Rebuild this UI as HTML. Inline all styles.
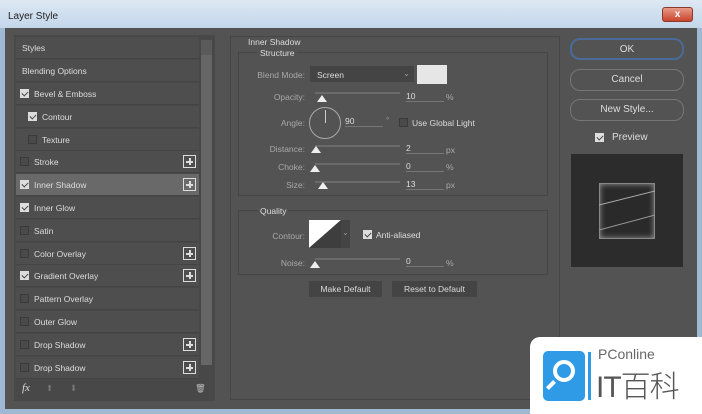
<!DOCTYPE html><html><head><style>
*{margin:0;padding:0;box-sizing:border-box}
body{width:702px;height:414px;overflow:hidden;background:#9fb9d4;font-family:"Liberation Sans",sans-serif;font-size:8.5px;color:#ddd;position:relative}
.a{position:absolute}
.t{position:absolute;white-space:nowrap}
.row{position:absolute;left:16px;width:183px;height:22px;background:#4e4e4e;border-bottom:1px solid #444}
.row span{position:absolute;top:6px}
.cb{position:absolute;top:6px;width:9px;height:9px;border:1px solid #3a3a3a;background:#4a4a4a}
.cb.on{background:#ddd;border-color:#ddd}
.cb.on:after{content:"";position:absolute;left:2px;top:0px;width:3px;height:5px;border:solid #444;border-width:0 1.5px 1.5px 0;transform:rotate(45deg)}
.plus{position:absolute;right:3px;top:4px;width:13px;height:13px;border:1px solid #ddd;}
.plus:before{content:"";position:absolute;left:2px;top:5px;width:7px;height:1.5px;background:#ddd}
.plus:after{content:"";position:absolute;left:5px;top:2px;width:1.5px;height:7px;background:#ddd}
.sl{position:absolute;height:2px;background:#6a6a6a;width:85px}
.th{position:absolute;width:0;height:0;border-left:5px solid transparent;border-right:5px solid transparent;border-bottom:7px solid #eee}
.in{position:absolute;border-bottom:1px solid #777;height:11px}
.lab{position:absolute;color:#a8a8a8;text-align:right;width:70px}
.btn{position:absolute;border:1px solid #777;border-radius:10px;text-align:center;font-size:10px;color:#ddd;height:22px;line-height:20px}
</style></head><body>
<div class="a" style="left:0;top:0;width:702px;height:28px;background:linear-gradient(#dde8f3,#c3d6ea)"></div>
<div class="t" style="left:8px;top:11px;font-size:10px;color:#222">Layer Style</div>
<div class="a" style="left:662px;top:7px;width:31px;height:15px;background:linear-gradient(#e89a8a,#c8442c);border:1px solid #8a3a2a;border-radius:3px;color:#fff;font-size:10px;text-align:center;line-height:13px;font-weight:bold">x</div>
<div class="a" style="left:5px;top:28px;width:692px;height:381px;background:#535353"></div>
<!-- left panel -->
<div class="a" style="left:14px;top:35px;width:201px;height:366px;background:#484848"></div>
<div class="a" style="left:201px;top:40px;width:11px;height:325px;background:#5a5a5a"></div>
<div class="a" style="left:201px;top:55px;width:11px;height:310px;background:#666"></div>
<div class="row" style="top:37px"><span style="left:6px">Styles</span></div>
<div class="row" style="top:60px"><span style="left:6px">Blending Options</span></div>
<div class="row" style="top:83px"><div class="cb on" style="left:4px"></div><span style="left:18px">Bevel &amp; Emboss</span></div>
<div class="row" style="top:106px"><div class="cb on" style="left:12px"></div><span style="left:26px">Contour</span></div>
<div class="row" style="top:129px"><div class="cb" style="left:12px"></div><span style="left:26px">Texture</span></div>
<div class="row" style="top:151px"><div class="cb" style="left:4px"></div><span style="left:18px">Stroke</span><div class="plus"></div></div>
<div class="row" style="top:174px;background:#696969"><div class="cb on" style="left:4px"></div><span style="left:18px">Inner Shadow</span><div class="plus"></div></div>
<div class="row" style="top:197px"><div class="cb on" style="left:4px"></div><span style="left:18px">Inner Glow</span></div>
<div class="row" style="top:220px"><div class="cb" style="left:4px"></div><span style="left:18px">Satin</span></div>
<div class="row" style="top:243px"><div class="cb" style="left:4px"></div><span style="left:18px">Color Overlay</span><div class="plus"></div></div>
<div class="row" style="top:265px"><div class="cb on" style="left:4px"></div><span style="left:18px">Gradient Overlay</span><div class="plus"></div></div>
<div class="row" style="top:288px"><div class="cb" style="left:4px"></div><span style="left:18px">Pattern Overlay</span></div>
<div class="row" style="top:311px"><div class="cb" style="left:4px"></div><span style="left:18px">Outer Glow</span></div>
<div class="row" style="top:334px"><div class="cb" style="left:4px"></div><span style="left:18px">Drop Shadow</span><div class="plus"></div></div>
<div class="row" style="top:357px"><div class="cb" style="left:4px"></div><span style="left:18px">Drop Shadow</span><div class="plus"></div></div>
<div class="t" style="left:22px;top:382px;font-size:11px;font-style:italic;font-family:'Liberation Serif',serif">fx</div>
<div class="t" style="left:46px;top:383px;color:#777">⬆</div><div class="t" style="left:70px;top:383px;color:#777">⬇</div>
<div class="t" style="left:195px;top:383px;color:#bbb">🗑</div>
<!-- middle -->
<div class="a" style="left:230px;top:36px;width:330px;height:364px;border:1px solid #464646"></div>
<div class="t" style="left:248px;top:37px">Inner Shadow</div>
<div class="a" style="left:238px;top:52px;width:310px;height:144px;border:1px solid #464646"></div>
<div class="t" style="left:258px;top:48px;background:#535353;padding:0 2px">Structure</div>
<div class="lab" style="left:235px;top:70px">Blend Mode:</div>
<div class="a" style="left:310px;top:66px;width:104px;height:16px;background:#444"></div>
<div class="t" style="left:317px;top:70px">Screen</div><div class="t" style="left:403px;top:68px;color:#999">⌄</div>
<div class="a" style="left:417px;top:65px;width:30px;height:19px;background:#e6e6e6"></div>
<div class="lab" style="left:235px;top:92px">Opacity:</div>
<div class="sl" style="left:315px;top:92px"></div><div class="th" style="left:317px;top:95px"></div>
<div class="in" style="left:406px;top:91px;width:38px">10</div><div class="t" style="left:446px;top:92px;color:#aaa">%</div>
<div class="lab" style="left:235px;top:118px">Angle:</div>
<div class="a" style="left:309px;top:107px;width:32px;height:32px;border:1px solid #aaa;border-radius:50%"></div>
<div class="a" style="left:325px;top:110px;width:1px;height:13px;background:#ccc"></div>
<div class="in" style="left:345px;top:116px;width:38px">90</div><div class="t" style="left:386px;top:115px;color:#999">°</div>
<div class="cb" style="left:399px;top:118px"></div><div class="t" style="left:412px;top:118px">Use Global Light</div>
<div class="lab" style="left:235px;top:144px">Distance:</div>
<div class="sl" style="left:315px;top:145px"></div><div class="th" style="left:311px;top:146px"></div>
<div class="in" style="left:406px;top:143px;width:38px">2</div><div class="t" style="left:446px;top:145px;color:#aaa">px</div>
<div class="lab" style="left:235px;top:162px">Choke:</div>
<div class="sl" style="left:315px;top:163px"></div><div class="th" style="left:310px;top:165px"></div>
<div class="in" style="left:406px;top:161px;width:38px">0</div><div class="t" style="left:446px;top:162px;color:#aaa">%</div>
<div class="lab" style="left:235px;top:180px">Size:</div>
<div class="sl" style="left:315px;top:181px"></div><div class="th" style="left:318px;top:182px"></div>
<div class="in" style="left:406px;top:179px;width:38px">13</div><div class="t" style="left:446px;top:180px;color:#aaa">px</div>
<div class="a" style="left:238px;top:210px;width:310px;height:65px;border:1px solid #464646"></div>
<div class="t" style="left:258px;top:206px;background:#535353;padding:0 2px">Quality</div>
<div class="lab" style="left:235px;top:231px">Contour:</div>
<svg class="a" style="left:309px;top:220px" width="34" height="28"><polygon points="0,0 32,0 0,28" fill="#fff"/><polygon points="32,0 32,28 0,28" fill="#3e3e3e"/></svg>
<div class="a" style="left:341px;top:220px;width:9px;height:28px;background:#444;color:#999;font-size:8px;text-align:center;line-height:26px">⌄</div>
<div class="cb on" style="left:363px;top:230px"></div><div class="t" style="left:376px;top:230px">Anti-aliased</div>
<div class="lab" style="left:235px;top:258px">Noise:</div>
<div class="sl" style="left:315px;top:258px"></div><div class="th" style="left:310px;top:261px"></div>
<div class="in" style="left:406px;top:256px;width:38px">0</div><div class="t" style="left:446px;top:258px;color:#aaa">%</div>
<div class="a" style="left:309px;top:281px;width:73px;height:16px;background:#444;text-align:center;line-height:16px">Make Default</div>
<div class="a" style="left:392px;top:281px;width:85px;height:16px;background:#444;text-align:center;line-height:16px">Reset to Default</div>
<!-- right -->
<div class="btn" style="left:570px;top:38px;width:114px;border:2px solid #4a6a9a">OK</div>
<div class="btn" style="left:570px;top:69px;width:114px">Cancel</div>
<div class="btn" style="left:570px;top:99px;width:114px">New Style...</div>
<div class="cb on" style="left:595px;top:133px"></div><div class="t" style="left:612px;top:132px;font-size:10px">Preview</div>
<div class="a" style="left:571px;top:154px;width:112px;height:113px;background:#2c2c2c"></div>
<div class="a" style="left:599px;top:183px;width:56px;height:56px;background:#2a2a2a;border:1px solid #888;box-shadow:inset 0 0 6px #999"></div>
<svg class="a" style="left:599px;top:183px" width="56" height="56"><line x1="0" y1="22" x2="56" y2="8" stroke="#aaa"/><line x1="0" y1="47" x2="56" y2="32" stroke="#999"/></svg>
<!-- logo -->
<div class="a" style="left:530px;top:337px;width:172px;height:77px;background:#fff;border-radius:10px 0 0 0"></div>
<div class="a" style="left:543px;top:351px;width:42px;height:50px;background:#2f9be6;border-radius:5px"></div>
<div class="a" style="left:553px;top:360px;width:22px;height:22px;border:4px solid #fff;border-radius:50%"></div>
<div class="a" style="left:546px;top:383px;width:10px;height:4px;background:#fff;transform:rotate(-45deg)"></div>
<div class="a" style="left:588px;top:352px;width:3px;height:48px;background:#2f9be6"></div>
<div class="t" style="left:598px;top:346px;font-size:14px;color:#666">PConline</div>
<div class="t" style="left:596px;top:362px;font-size:30px;color:#555;font-family:'Liberation Sans','Noto Sans CJK SC',sans-serif;font-weight:300;letter-spacing:-1px">IT百科</div>
</body></html>
